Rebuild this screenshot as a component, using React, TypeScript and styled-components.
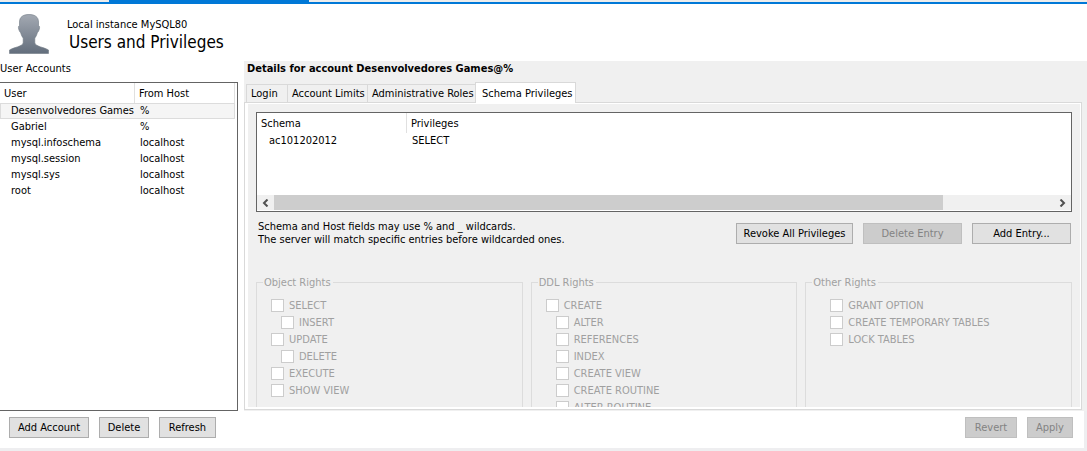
import React from "react";
import styled, { createGlobalStyle, css } from "styled-components";

const GlobalStyle = createGlobalStyle`
  *, *::before, *::after { box-sizing: border-box; }
  body {
    margin: 0;
    background: #fff;
    color: #000;
    font-family: Tahoma, "DejaVu Sans Condensed", "DejaVu Sans", sans-serif;
    font-size: 11px;
    line-height: 13px;
  }
  button, input { font: inherit; color: inherit; }
`;

const Window = styled.div`
  display: flex;
  flex-direction: column;
  height: 100vh;
  overflow: hidden;
  border-bottom: 3px solid #eeeef0;
`;

const TabStrip = styled.div`
  flex: none;
  height: 4px;
  padding-left: 109px;
  background: #ececec;
  border-bottom: 2px solid #0078d7;
`;

const ActiveDocument = styled.div`
  width: 200px;
  height: 2px;
  background: #0078d7;
`;

const Header = styled.header`
  flex: none;
  display: flex;
  align-items: center;
  gap: 18px;
  height: 57px;
  padding-left: 9px;
`;

const Portrait = styled.svg`
  width: 40px;
  height: 40px;
  margin-top: 3px;
`;

const Titles = styled.div`
  padding-top: 6px;
`;

const Instance = styled.p`
  margin: 0;
`;

const PageTitle = styled.h1`
  margin: 0;
  padding-left: 2px;
  font-size: 17px;
  font-weight: normal;
  line-height: 22px;
`;

const Main = styled.main`
  flex: 1;
  min-height: 0;
  display: flex;
  gap: 6px;
`;

const Accounts = styled.section`
  flex: none;
  width: 238px;
  display: flex;
  flex-direction: column;
`;

const SectionTitle = styled.h2<{ $strong?: boolean }>`
  flex: none;
  margin: 0;
  height: 21px;
  padding-left: ${(p) => (p.$strong ? 3 : 0)}px;
  font-size: 11px;
  line-height: 15px;
  font-weight: ${(p) => (p.$strong ? "bold" : "normal")};
`;

const ListFrame = styled.div`
  flex: 1;
  min-height: 0;
  padding-right: 2px;
  background: #fff;
  border: 1px solid #646464;
  border-left: 0;
`;

const Grid = styled.table`
  width: 100%;
  table-layout: fixed;
  border-collapse: separate;
  border-spacing: 0;
`;

const HeadCell = styled.th<{ $width?: number; $last?: boolean }>`
  width: ${(p) => (p.$width ? `${p.$width}px` : "auto")};
  height: 20px;
  padding: 0 0 0 4px;
  border-right: ${(p) => (p.$last ? "0" : "1px solid #e0e0e0")};
  text-align: left;
  font-weight: normal;
`;

const Cell = styled.td<{ $indent: number; $selected?: boolean }>`
  height: 16px;
  padding: 0 0 0 ${(p) => p.$indent}px;
  white-space: nowrap;
  overflow: hidden;
  line-height: 16px;
  ${(p) =>
    p.$selected &&
    css`
      background: #f5f5f5;
      box-shadow: inset 0 1px #dcdcdc, inset 0 -1px #dcdcdc;
      &:first-child { border-left: 1px solid #dcdcdc; padding-left: ${p.$indent - 1}px; }
      &:last-child { border-right: 1px solid #dcdcdc; }
    `}
`;

const Details = styled.section`
  flex: 1;
  min-width: 0;
  display: flex;
  flex-direction: column;
  padding-right: 5px;
  padding-bottom: 1px;
  background: #f0f0f0;
`;

const Tabs = styled.div`
  flex: none;
  display: flex;
  align-items: flex-end;
  padding-left: 2px;
`;

const Tab = styled.button<{ $width: number; $active?: boolean }>`
  width: ${(p) => p.$width}px;
  height: ${(p) => (p.$active ? 21 : 18)}px;
  margin-bottom: ${(p) => (p.$active ? -1 : 0)}px;
  z-index: ${(p) => (p.$active ? 1 : 0)};
  padding: 0 0 0 ${(p) => (p.$active ? 6 : 4)}px;
  border: 1px solid #d9d9d9;
  border-bottom: 0;
  border-right-width: ${(p) => (p.$active ? 1 : 0)}px;
  background: ${(p) => (p.$active ? "#fff" : "#f0f0f0")};
  text-align: left;
  white-space: nowrap;
`;

const Pane = styled.div`
  flex: 1;
  min-height: 0;
  display: flex;
  border: 1px solid #d9d9d9;
  background: #fff;
  padding: 1px 1px 2px 3px;
`;

const PaneBody = styled.div`
  flex: 1;
  min-width: 0;
  overflow: hidden;
  padding: 8px 8px 0;
  background: #f0f0f0;
`;

const SchemaFrame = styled.div`
  display: flex;
  flex-direction: column;
  justify-content: space-between;
  height: 100px;
  background: #fff;
  border: 1px solid #646464;
`;

const ScrollBar = styled.div`
  display: flex;
  height: 16px;
  background: #f0f0f0;
  border-bottom: 1px solid #fff;
`;

const ScrollArrow = styled.button`
  flex: none;
  display: grid;
  place-items: center;
  width: 17px;
  padding: 0;
  border: 0;
  background: #f0f0f0;
`;

const ScrollTrack = styled.div`
  flex: 1;
`;

const ScrollThumb = styled.div`
  flex: 6;
  background: #cdcdcd;
`;

const EntryBar = styled.div`
  display: flex;
  justify-content: space-between;
  align-items: center;
  padding: 8px 1px 0 2px;
`;

const Note = styled.p`
  margin: 0;
`;

const Buttons = styled.div`
  display: flex;
  gap: 10px;
`;

const PushButton = styled.button<{ $width: number }>`
  width: ${(p) => p.$width}px;
  height: 21px;
  padding: 0;
  border: 1px solid #adadad;
  background: #e1e1e1;
  white-space: nowrap;
  &:disabled {
    border-color: #bfbfbf;
    background: #ccc;
    color: #838383;
  }
`;

const Rights = styled.div`
  display: grid;
  grid-template-columns: repeat(3, 1fr);
  gap: 8px;
  padding-top: 30px;
`;

const Group = styled.fieldset<{ $indent: number }>`
  min-width: 0;
  margin: 0;
  padding: 8px 0 24px ${(p) => p.$indent}px;
  border: 1px solid #dcdcdc;
  color: #a0a0a0;
`;

const GroupTitle = styled.legend<{ $indent: number }>`
  margin-left: ${(p) => 6 - p.$indent}px;
  padding: 0 2px 0 1px;
`;

const Right = styled.label<{ $nested?: boolean }>`
  display: flex;
  align-items: center;
  gap: 5px;
  height: 17px;
  padding-left: ${(p) => (p.$nested ? 10 : 0)}px;
`;

const Check = styled.input`
  appearance: none;
  flex: none;
  width: 13px;
  height: 13px;
  margin: 0;
  border: 1px solid #ccc;
  background: #fff;
`;

const Footer = styled.footer`
  flex: none;
  display: flex;
  justify-content: space-between;
  height: 37px;
  padding: 6px 11px 0 9px;
  border-right: 3px solid #eeeef0;
`;

const accounts = [
  ["Desenvolvedores Games", "%"],
  ["Gabriel", "%"],
  ["mysql.infoschema", "localhost"],
  ["mysql.session", "localhost"],
  ["mysql.sys", "localhost"],
  ["root", "localhost"],
];

type RightItem = { name: string; nested?: boolean };
const groups: { title: string; indent: number; items: RightItem[] }[] = [
  {
    title: "Object Rights",
    indent: 14,
    items: [
      { name: "SELECT" },
      { name: "INSERT", nested: true },
      { name: "UPDATE" },
      { name: "DELETE", nested: true },
      { name: "EXECUTE" },
      { name: "SHOW VIEW" },
    ],
  },
  {
    title: "DDL Rights",
    indent: 14,
    items: [
      { name: "CREATE" },
      { name: "ALTER", nested: true },
      { name: "REFERENCES", nested: true },
      { name: "INDEX", nested: true },
      { name: "CREATE VIEW", nested: true },
      { name: "CREATE ROUTINE", nested: true },
      { name: "ALTER ROUTINE", nested: true },
    ],
  },
  {
    title: "Other Rights",
    indent: 24,
    items: [{ name: "GRANT OPTION" }, { name: "CREATE TEMPORARY TABLES" }, { name: "LOCK TABLES" }],
  },
];

export default function App() {
  return (
    <Window>
      <GlobalStyle />
      <TabStrip>
        <ActiveDocument />
      </TabStrip>
      <Header>
        <Portrait viewBox="0 0 40 40" aria-hidden="true">
          <defs>
            <linearGradient id="shade" x1="0" y1="0" x2="0" y2="1">
              <stop offset="0" stopColor="#a3a9b2" />
              <stop offset="1" stopColor="#636e7c" />
            </linearGradient>
          </defs>
          <path
            fill="url(#shade)"
            stroke="#6f7883"
            strokeWidth="0.6"
            d="M20 .5C14 .5 10.500 3 10.500 8V11.500C9 12 9.300 14.500 10.200 16.500C10.800 18 11.300 18.500 11.700 18.700C12.200 21 13 22.500 14.200 24V29C13.500 32.500 4 33.500 .5 36V39.500H39.500V36C36 33.500 26.500 32.500 25.800 29V24C27 22.500 27.800 21 28.300 18.700C28.700 18.500 29.200 18 29.800 16.500C30.700 14.500 31 12 29.500 11.500V8C29.500 3 26 .5 20 .5Z"
          />
        </Portrait>
        <Titles>
          <Instance>Local instance MySQL80</Instance>
          <PageTitle>Users and Privileges</PageTitle>
        </Titles>
      </Header>
      <Main>
        <Accounts>
          <SectionTitle>User Accounts</SectionTitle>
          <ListFrame>
            <Grid>
              <thead>
                <tr>
                  <HeadCell $width={135}>User</HeadCell>
                  <HeadCell>From Host</HeadCell>
                </tr>
              </thead>
              <tbody>
                {accounts.map(([user, host], i) => (
                  <tr key={user}>
                    <Cell $indent={11} $selected={i === 0}>{user}</Cell>
                    <Cell $indent={5} $selected={i === 0}>{host}</Cell>
                  </tr>
                ))}
              </tbody>
            </Grid>
          </ListFrame>
        </Accounts>
        <Details>
          <SectionTitle $strong>Details for account Desenvolvedores Games@%</SectionTitle>
          <Tabs role="tablist">
            <Tab role="tab" $width={41}>Login</Tab>
            <Tab role="tab" $width={80}>Account Limits</Tab>
            <Tab role="tab" $width={108}>Administrative Roles</Tab>
            <Tab role="tab" aria-selected $width={101} $active>Schema Privileges</Tab>
          </Tabs>
          <Pane>
            <PaneBody>
              <SchemaFrame>
                <Grid>
                  <thead>
                    <tr>
                      <HeadCell $width={150}>Schema</HeadCell>
                      <HeadCell $last>Privileges</HeadCell>
                    </tr>
                  </thead>
                  <tbody>
                    <tr>
                      <Cell $indent={12}>ac101202012</Cell>
                      <Cell $indent={5}>SELECT</Cell>
                    </tr>
                  </tbody>
                </Grid>
                <ScrollBar>
                  <ScrollArrow aria-label="Scroll left">
                    <svg width="7" height="8" viewBox="0 0 7 8">
                      <path d="M5.500 .5L2 4L5.500 7.500" fill="none" stroke="#505050" strokeWidth="2" />
                    </svg>
                  </ScrollArrow>
                  <ScrollThumb />
                  <ScrollTrack />
                  <ScrollArrow aria-label="Scroll right">
                    <svg width="7" height="8" viewBox="0 0 7 8">
                      <path d="M1.500 .5L5 4L1.500 7.500" fill="none" stroke="#505050" strokeWidth="2" />
                    </svg>
                  </ScrollArrow>
                </ScrollBar>
              </SchemaFrame>
              <EntryBar>
                <Note>
                  Schema and Host fields may use % and _ wildcards.
                  <br />
                  The server will match specific entries before wildcarded ones.
                </Note>
                <Buttons>
                  <PushButton $width={117}>Revoke All Privileges</PushButton>
                  <PushButton $width={99} disabled>Delete Entry</PushButton>
                  <PushButton $width={99}>Add Entry...</PushButton>
                </Buttons>
              </EntryBar>
              <Rights>
                {groups.map((g) => (
                  <Group key={g.title} $indent={g.indent} disabled>
                    <GroupTitle $indent={g.indent}>{g.title}</GroupTitle>
                    {g.items.map((r) => (
                      <Right key={r.name} $nested={r.nested}>
                        <Check type="checkbox" />
                        {r.name}
                      </Right>
                    ))}
                  </Group>
                ))}
              </Rights>
            </PaneBody>
          </Pane>
        </Details>
      </Main>
      <Footer>
        <Buttons>
          <PushButton $width={80}>Add Account</PushButton>
          <PushButton $width={50}>Delete</PushButton>
          <PushButton $width={57}>Refresh</PushButton>
        </Buttons>
        <Buttons>
          <PushButton $width={52} disabled>Revert</PushButton>
          <PushButton $width={46} disabled>Apply</PushButton>
        </Buttons>
      </Footer>
    </Window>
  );
}
